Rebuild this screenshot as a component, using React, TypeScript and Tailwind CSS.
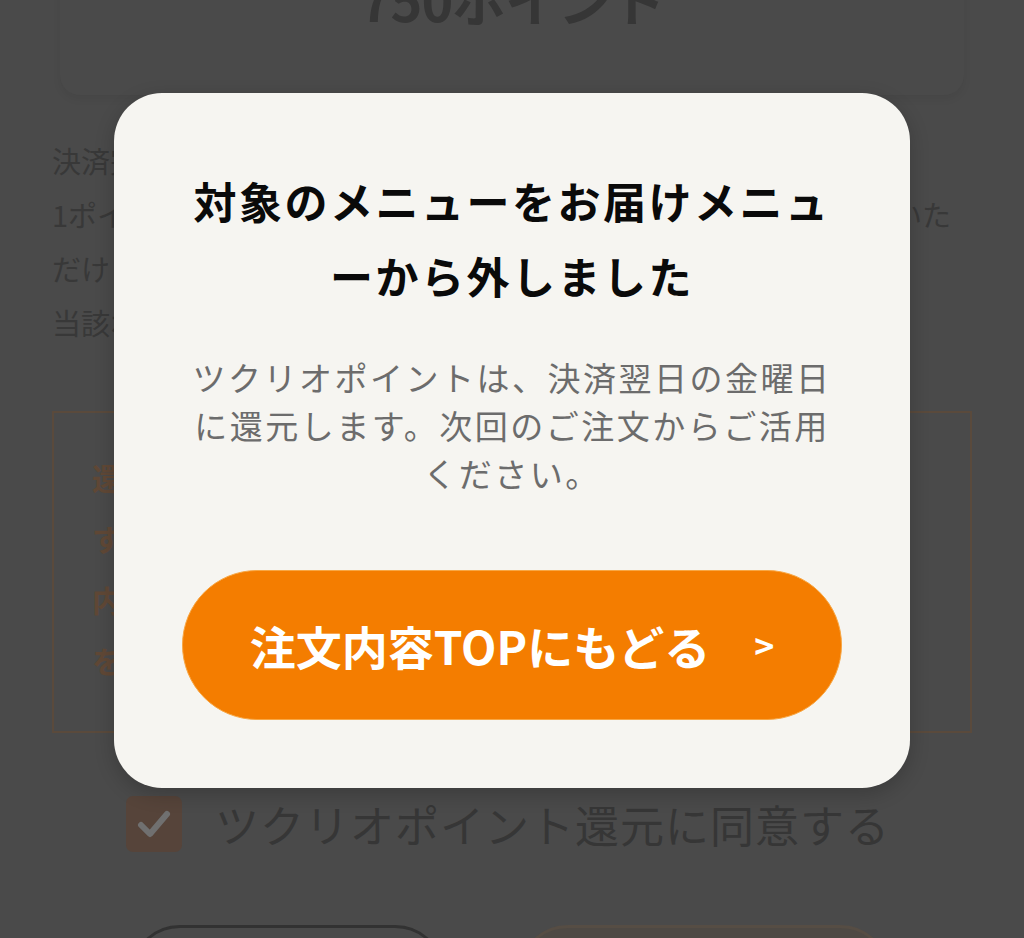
import React from "react";

export default function App() {
  return (
    <div className="relative h-[938px] w-full overflow-hidden bg-[#4a4a4a] font-['Noto_Sans_CJK_JP','Noto_Sans',sans-serif]">
      {/* dimmed page underneath */}
      <div className="flex flex-col">
        <div className="mx-[60px] -mt-[40px] flex h-[135px] justify-center rounded-b-[20px] bg-[#4a4a4a] shadow-[0_4px_8px_rgba(0,0,0,0.06)]">
          <div className="pt-[9px] text-[54px] font-bold leading-[60px] tracking-[-1px] text-[#363636]">750ポイント</div>
        </div>

        <div className="mt-[38px] px-[52px] text-[29px] leading-[54px] text-[#383838]">
          <div className="whitespace-nowrap">決済完了後、翌日の金曜日に還元します。</div>
          <div className="whitespace-nowrap">1ポイント＝1円として、次回以降のご注文時に割引としてご利用いた</div>
          <div className="whitespace-nowrap">だけます。</div>
          <div className="whitespace-nowrap">当該ポイントの有効期限は1年間です。</div>
        </div>

        <div className="mx-[52px] mt-[62px] h-[322px] border-2 border-[#5a4a3c] px-[38px] pt-[34px] text-[30px] font-bold leading-[61px] text-[#604836]">
          <div className="whitespace-nowrap">還元予定のポイントは、お届けメニューに</div>
          <div className="whitespace-nowrap">すべての対象メニューの合計金額をもと</div>
          <div className="whitespace-nowrap">内容の変更・キャンセルの場合、還元ポイ</div>
          <div className="whitespace-nowrap">をご了承ください。</div>
        </div>

        <div className="mt-[63px] flex items-center pl-[126px]">
          <div className="flex h-[56px] w-[56px] items-center justify-center rounded-[7px] bg-[#56443a]">
            <svg width="34" height="30" viewBox="0 0 34 30" fill="none">
              <polyline points="4,16 13,25 30,5" stroke="#707070" strokeWidth="6" strokeLinecap="round" strokeLinejoin="round" />
            </svg>
          </div>
          <div className="ml-[33px] whitespace-nowrap text-[44px] leading-[56px] tracking-[1px] text-[#363636]">ツクリオポイント還元に同意する</div>
        </div>

        <div className="mt-[73px] flex items-start pl-[130px]">
          <div className="h-[100px] w-[315px] rounded-full border-[3px] border-[#323232]" />
          <div className="ml-[73px] h-[100px] w-[372px] rounded-full border-[3px] border-[#564d44] bg-[#4e4944]" />
        </div>
      </div>

      {/* modal */}
      <div className="absolute inset-0 flex items-start justify-center pt-[93px]">
        <div className="flex w-[796px] flex-col rounded-[48px] bg-[#f6f5f1] px-[68px] pt-[70px] pb-[68px] shadow-[0_6px_20px_rgba(0,0,0,0.2)]">
          <h2 className="text-center text-[43px] font-bold leading-[75px] tracking-[2.5px] text-[#0a0a0a]">
            対象のメニューをお届けメニューから外しました
          </h2>
          <p className="mt-[40px] text-center text-[33px] leading-[48px] tracking-[2.5px] text-[#6c6c6c]">
            ツクリオポイントは、決済翌日の金曜日に還元します。次回のご注文からご活用ください。
          </p>
          <button className="mt-[73px] flex h-[150px] w-full items-center justify-center rounded-full border border-[#f8a744] bg-[#f47d00] text-white">
            <span className="text-[46px] font-bold leading-none">注文内容TOPにもどる</span>
            <span className="ml-[44px] text-[34px] font-bold leading-none">&gt;</span>
          </button>
        </div>
      </div>
    </div>
  );
}
